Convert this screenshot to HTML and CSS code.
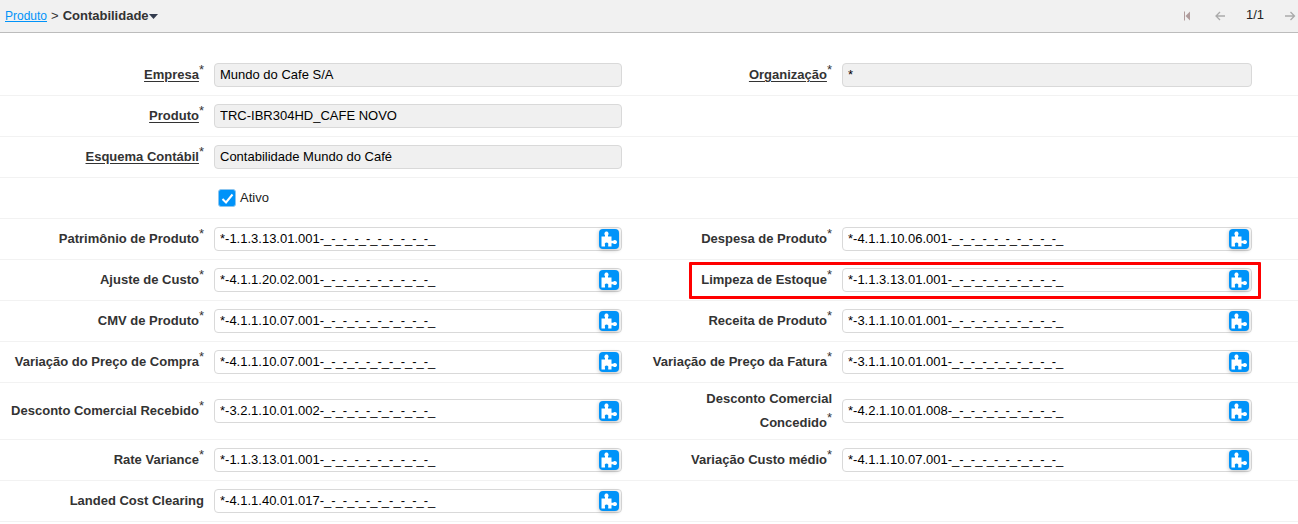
FILE: index.html
```html
<!DOCTYPE html>
<html lang="pt-BR">
<head>
<meta charset="utf-8">
<title>Produto - Contabilidade</title>
<link rel="stylesheet" href="styles.css">
</head>
<body>
<svg class="defs" aria-hidden="true">
  <symbol id="puzzle" viewBox="0 0 20 20"><path d="M2.500 7.500H6V6.200C4.900 5.200 5.400 2.400 7.500 2.400s2.600 2.800 1.500 3.800v1.300h3.500v4.300h1.600c1-1.500 3.900-1 3.900 1.200s-2.900 2.700-3.900 1.200h-1.600v3.300H9.200v-1.700c.6-1.300-.2-2.300-1.600-2.300s-2.300 1-1.600 2.300v1.700H2.500z" fill="#fff"/></symbol>
</svg>
<header class="topbar">
  <nav class="crumbs"><a href="#">Produto</a><span>&gt;</span><button type="button" class="current">Contabilidade<svg width="9" height="5" viewBox="0 0 9 5"><path d="M0 0h9L4.500 5z" fill="#333c4e"/></svg></button></nav>
  <div class="pager">
    <button type="button" aria-label="Primeiro"><svg width="12" height="12" viewBox="0 0 12 12"><path d="M2.500 1.500v9" stroke="#b09c9c"/><path d="M8 1.500v9L3.500 6z" fill="#b09c9c"/></svg></button>
    <button type="button" aria-label="Anterior"><svg width="12" height="12" viewBox="0 0 12 12"><path d="M11 6H2M6 2L2 6l4 4" fill="none" stroke="#aaa" stroke-width="1.300"/></svg></button>
    <span>1/1</span>
    <button type="button" aria-label="Próximo"><svg width="12" height="12" viewBox="0 0 12 12"><path d="M1 6h9M6.500 2l4 4-4 4" fill="none" stroke="#aaa" stroke-width="1.300"/></svg></button>
  </div>
</header>
<main class="form" id="form"></main>
<script src="form.js"></script>
</body>
</html>
```
FILE: styles.css
```css
* { box-sizing: border-box; }
body {
  margin: 0;
  background: #fff;
  color: #333;
  font: 13px/24px "Liberation Sans", Arial, sans-serif;
}
.defs { display: none; }
button {
  margin: 0;
  padding: 0;
  border: 0;
  background: none;
  color: inherit;
  font: inherit;
}
.topbar {
  display: flex;
  justify-content: space-between;
  align-items: center;
  height: 33px;
  padding: 0 2px 0 5px;
  background: #f1f1f1;
  border-bottom: 1px solid #bcbcbc;
}
.crumbs { display: flex; gap: 4px; }
.crumbs a { color: #0093f9; font-size: 12px; }
.crumbs .current {
  display: flex;
  align-items: center;
  font-weight: bold;
}
.pager { display: flex; align-items: center; gap: 20px; color: #222; }
.pager button { display: flex; }
.pager span { padding-bottom: 3px; }
.form { padding-top: 22px; }
.row {
  display: grid;
  grid-template-columns: 204fr 408fr 200fr 410fr;
  column-gap: 10px;
  align-items: center;
  min-height: 41px;
  padding: 4px 46px 4px 0;
  border-bottom: 1px solid #f2f2f2;
}
.label { padding-left: 8px; text-align: right; font-weight: bold; }
.label.linked span { text-decoration: underline; text-underline-offset: 2px; }
.label sup { font-weight: normal; line-height: 0; font-size: 13px; }
.field { position: relative; display: flex; }
.field input {
  width: 100%;
  height: 24px;
  padding: 0 5px;
  border: 1px solid #d9d9d9;
  border-radius: 4px;
  background: #fff;
  color: #000;
  font: inherit;
}
.field input[readonly] { background: #f0f0f0; }
.picker {
  position: absolute;
  top: 2px;
  right: 3px;
  width: 20px;
  height: 20px;
  border-radius: 4px;
  background: #0093f9;
  box-shadow: 0 1px 4px #0004;
}
.picker svg { display: block; width: 20px; height: 20px; }
.check {
  grid-column: 2;
  display: flex;
  align-items: center;
  gap: 4px;
  padding-left: 4px;
  color: #222;
}
.tick { display: grid; place-items: center; }
.tick > * { grid-area: 1 / 1; }
.tick input {
  appearance: none;
  width: 18px;
  height: 18px;
  margin: 0;
  border: 1px solid #d9d9d9;
  border-radius: 3px;
}
.tick input:checked { background: #0093f9; border-color: #8cc6f0; }
.tick svg { pointer-events: none; }
.marked::after {
  content: "";
  position: absolute;
  inset: -6px -9px -7px -153px;
  border: 3px solid #f00;
  border-radius: 1px;
  pointer-events: none;
}
```
FILE: form.js
```js
const mask = "-_-_-_-_-_-_-_-_-_-_";
const acct = (label, code, extra = {}) => ({ label, value: "*-" + code + mask, required: true, picker: true, ...extra });
const info = (label, value) => ({ label, value, required: true, linked: true });

const rows = [
  [info("Empresa", "Mundo do Cafe S/A"), info("Organização", "*")],
  [info("Produto", "TRC-IBR304HD_CAFE NOVO")],
  [info("Esquema Contábil", "Contabilidade Mundo do Café")],
  "check",
  [acct("Patrimônio de Produto", "1.1.3.13.01.001"), acct("Despesa de Produto", "4.1.1.10.06.001")],
  [acct("Ajuste de Custo", "4.1.1.20.02.001"), acct("Limpeza de Estoque", "1.1.3.13.01.001", { marked: true })],
  [acct("CMV de Produto", "4.1.1.10.07.001"), acct("Receita de Produto", "3.1.1.10.01.001")],
  [acct("Variação do Preço de Compra", "4.1.1.10.07.001"), acct("Variação de Preço da Fatura", "3.1.1.10.01.001")],
  [acct("Desconto Comercial Recebido", "3.2.1.10.01.002"), acct("Desconto Comercial Concedido", "4.2.1.10.01.008")],
  [acct("Rate Variance", "1.1.3.13.01.001"), acct("Variação Custo médio", "4.1.1.10.07.001")],
  [acct("Landed Cost Clearing", "4.1.1.40.01.017", { required: false })],
];

let n = 0;
const cell = (f) => {
  const id = "field" + ++n;
  return `<label class="label${f.linked ? " linked" : ""}" for="${id}"><span>${f.label}</span>${f.required ? "<sup>*</sup>" : ""}</label>
    <div class="field${f.marked ? " marked" : ""}"><input id="${id}" type="text" value="${f.value}"${f.linked ? " readonly" : ""}>${
      f.picker ? `<button type="button" class="picker" aria-label="Selecionar ${f.label}"><svg><use href="#puzzle"/></svg></button>` : ""
    }</div>`;
};
const check = `<label class="check"><span class="tick"><input type="checkbox" checked><svg width="17" height="17" viewBox="0 0 17 17"><path d="M3.500 9l3.500 3.500L13.500 4.500" fill="none" stroke="#fff" stroke-width="2"/></svg></span>Ativo</label>`;

document.getElementById("form").innerHTML = rows
  .map((r) => `<div class="row">${r === "check" ? check : r.map(cell).join("")}</div>`)
  .join("");
```
